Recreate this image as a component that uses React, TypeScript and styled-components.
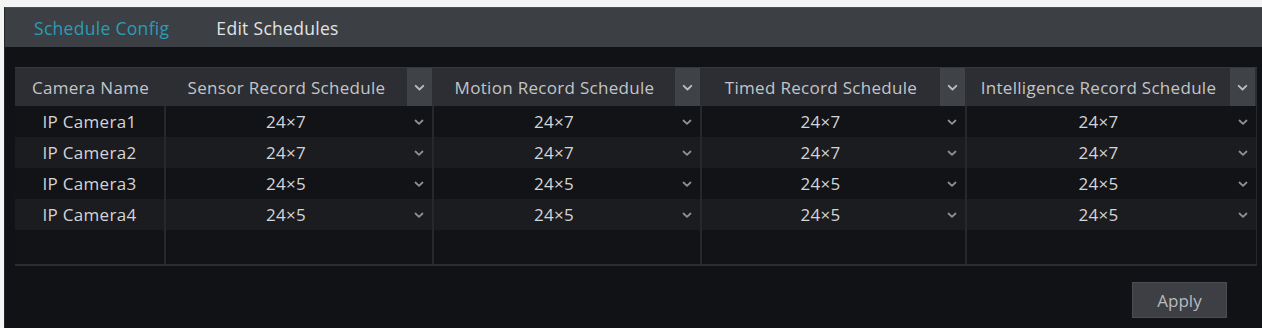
import styled, {createGlobalStyle} from "styled-components";

const GlobalStyle = createGlobalStyle`
    html, body {
        margin: 0;
        padding: 0;
        background: #f4f4f4;
    }
    body {
        font-family: "Open Sans", "Noto Sans", sans-serif;
    }
`

type ScheduleRow = {
    camera: string,
    sensor: string,
    motion: string,
    timed: string,
    intelligence: string,
}

const rows: ScheduleRow[] = [
    {camera: "IP Camera1", sensor: "24×7", motion: "24×7", timed: "24×7", intelligence: "24×7"},
    {camera: "IP Camera2", sensor: "24×7", motion: "24×7", timed: "24×7", intelligence: "24×7"},
    {camera: "IP Camera3", sensor: "24×5", motion: "24×5", timed: "24×5", intelligence: "24×5"},
    {camera: "IP Camera4", sensor: "24×5", motion: "24×5", timed: "24×5", intelligence: "24×5"},
]

const columns = [
    {key: "sensor", title: "Sensor Record Schedule"},
    {key: "motion", title: "Motion Record Schedule"},
    {key: "timed", title: "Timed Record Schedule"},
    {key: "intelligence", title: "Intelligence Record Schedule"},
] as const

const Chevron = ({size = 12, color = "#8c8f94"}: { size?: number, color?: string }) => (
    <svg width={size} height={size} viewBox="0 0 12 12" aria-hidden="true">
        <path d="M2.5 4.5 L6 7.8 L9.5 4.5" fill="none" stroke={color} strokeWidth="1.8"
              strokeLinecap="round" strokeLinejoin="round"/>
    </svg>
)

export default function App() {
    return (
        <>
            <GlobalStyle/>
            <Page>
                <Panel>
                    <TabBar>
                        <Tab $active>Schedule Config</Tab>
                        <Tab>Edit Schedules</Tab>
                    </TabBar>

                    <Content>
                        <Table>
                            <HeaderRow>
                                <NameHeader>Camera Name</NameHeader>
                                {columns.map(col => (
                                    <HeaderCell key={col.key}>
                                        <HeaderTitle>{col.title}</HeaderTitle>
                                        <ArrowBox><Chevron size={13} color="#b9bcc0"/></ArrowBox>
                                    </HeaderCell>
                                ))}
                            </HeaderRow>

                            {rows.map((row, i) => (
                                <BodyRow key={row.camera} $alt={i % 2 === 1}>
                                    <NameCell>{row.camera}</NameCell>
                                    {columns.map(col => (
                                        <SelectCell key={col.key}>
                                            <SelectValue>{row[col.key]}</SelectValue>
                                            <SelectArrow><Chevron size={12}/></SelectArrow>
                                        </SelectCell>
                                    ))}
                                </BodyRow>
                            ))}

                            <BlankRow>
                                <NameCell/>
                                {columns.map(col => <SelectCell key={col.key}/>)}
                            </BlankRow>
                        </Table>

                        <Footer>
                            <ApplyButton>Apply</ApplyButton>
                        </Footer>
                    </Content>
                </Panel>
            </Page>
        </>
    )
}

const Page = styled.div`
    padding: 7px 0 0 4px;
    width: 1262px;
    height: 328px;
    box-sizing: border-box;
`

const Panel = styled.div`
    display: flex;
    flex-direction: column;
    height: 321px;
    background: #111216;
    border-left: 1px solid #26282c;
`

const TabBar = styled.div`
    display: flex;
    align-items: center;
    gap: 47px;
    height: 40px;
    padding-left: 29px;
    background: #3c3f44;
    border-top: 1px solid #4a4d52;
    box-sizing: border-box;
`

const Tab = styled.span<{ $active?: boolean }>`
    font-size: 17.5px;
    letter-spacing: 0.3px;
    color: ${({$active}) => $active ? "#2a9cb6" : "#e2e3e5"};
    cursor: pointer;
`

const Content = styled.div`
    display: flex;
    flex-direction: column;
    flex: 1;
    padding: 20px 5px 0 10px;
`

const GRID = "151px 268px 268px 265px 290px"

const Table = styled.div`
    display: flex;
    flex-direction: column;
    border-bottom: 2px solid #2b2d31;
`

const HeaderRow = styled.div`
    display: grid;
    grid-template-columns: ${GRID};
    height: 39px;
    background: #2c2e33;
    border-top: 1px solid #35373c;
    box-sizing: border-box;
`

const headerText = `
    font-size: 17px;
    color: #c3c5c8;
    letter-spacing: 0.3px;
    white-space: nowrap;
`

const NameHeader = styled.div`
    display: flex;
    align-items: center;
    justify-content: center;
    ${headerText}
`

const HeaderCell = styled.div`
    display: flex;
    align-items: stretch;
`

const HeaderTitle = styled.div`
    flex: 1;
    display: flex;
    align-items: center;
    justify-content: center;
    ${headerText}
`

const ArrowBox = styled.div`
    width: 25px;
    margin-right: 2px;
    display: flex;
    align-items: center;
    justify-content: center;
    background: #3f4247;
`

const BodyRow = styled.div<{ $alt?: boolean }>`
    display: grid;
    grid-template-columns: ${GRID};
    height: 31px;
    background: ${({$alt}) => $alt ? "#1b1c20" : "#121317"};
`

const BlankRow = styled.div`
    display: grid;
    grid-template-columns: ${GRID};
    height: 34px;
    background: #121317;
`

const NameCell = styled.div`
    display: flex;
    align-items: center;
    justify-content: center;
    font-size: 17px;
    color: #d4d5d7;
    letter-spacing: 0.3px;
    border-right: 2px solid #26282c;
`

const SelectCell = styled.div`
    display: flex;
    align-items: center;
    border-right: 2px solid #26282c;

    &:last-child {
        border-right: 1px solid #26282c;
    }
`

const SelectValue = styled.div`
    flex: 1;
    text-align: center;
    font-size: 17px;
    letter-spacing: 0.3px;
    color: #d4d5d7;
`

const SelectArrow = styled.div`
    width: 26px;
    display: flex;
    justify-content: center;
`

const Footer = styled.div`
    display: flex;
    justify-content: flex-end;
    padding: 16px 30px 0 0;
`

const ApplyButton = styled.button`
    width: 95px;
    height: 36px;
    background: #3d3f44;
    border: 1px solid #4a4c51;
    color: #b8babe;
    font-family: "Open Sans", "Noto Sans", sans-serif;
    font-size: 17px;
    cursor: pointer;
`
